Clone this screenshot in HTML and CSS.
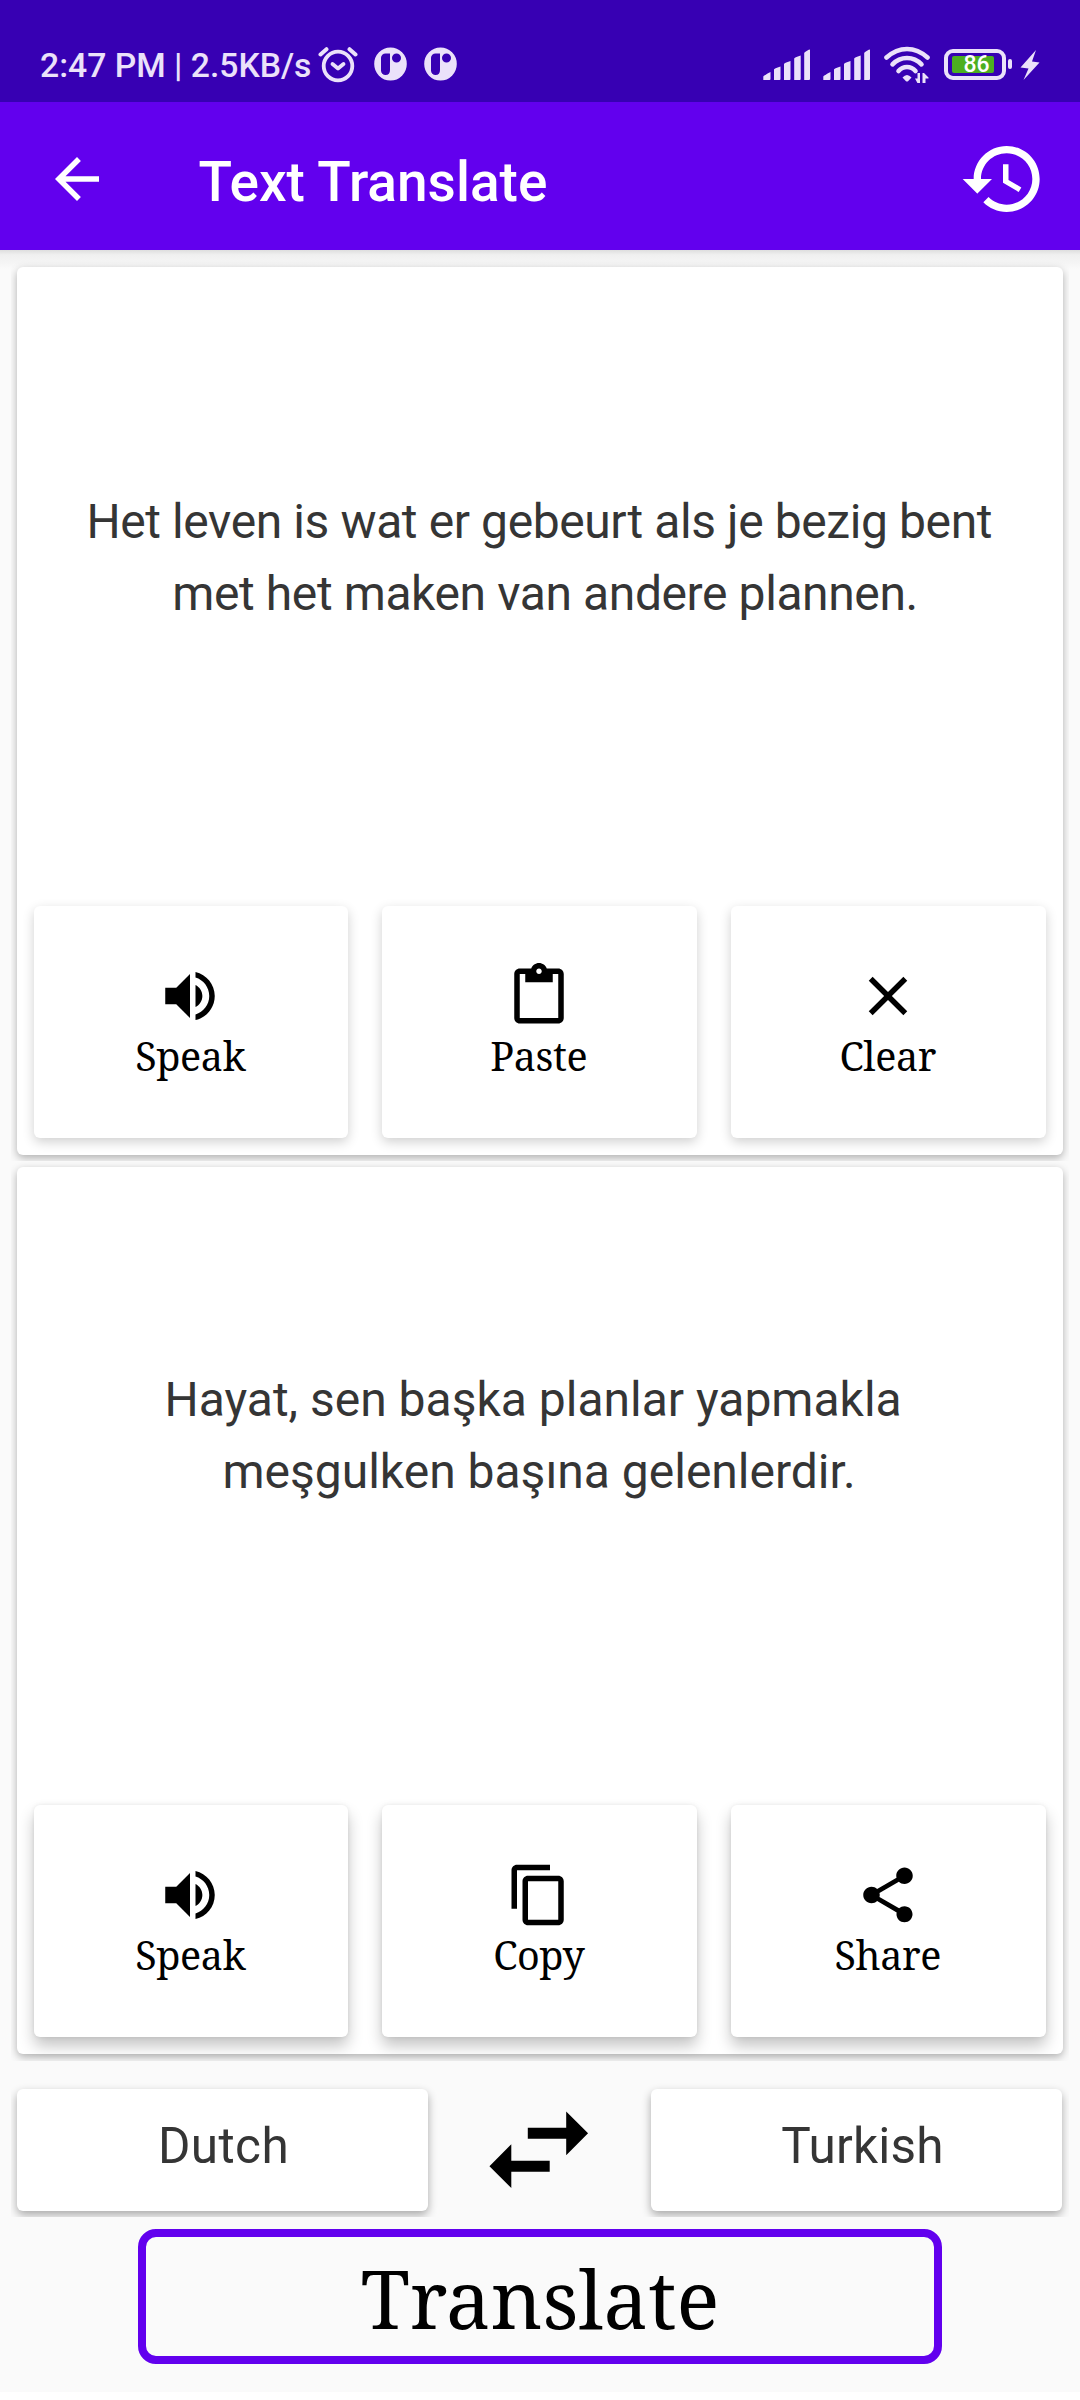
FILE: index.html
```html
<!DOCTYPE html>
<html lang="en">
<head>
<meta charset="utf-8">
<title>Text Translate</title>
<link rel="stylesheet" href="styles.css">
</head>
<body>
<svg class="defs" width="0" height="0">
  <symbol id="speak" viewBox="0 0 24 24"><path d="M3 9v6h4l5 5V4L7 9H3zm13.500 3c0-1.770-1.020-3.290-2.500-4.030v8.050c1.480-.73 2.500-2.250 2.500-4.020zM14 3.230v2.060c2.890.86 5 3.540 5 6.710s-2.110 5.850-5 6.710v2.060c4.010-.91 7-4.490 7-8.770s-2.990-7.860-7-8.770z"/></symbol>
  <symbol id="signal" viewBox="0 0 48 32"><path d="M.3 31V27.500Q.8 26.500 7.500 23V30q0 1-1 1zM11 31V20.500q0-1 6.500-3V30q0 1-1 1h-5.500zM21 31V15q0-1 6.500-3V30q0 1-1 1h-5.500zM31.200 31V9.500q0-1 6.500-3V30q0 1-1 1h-5.500zM41.200 31V4q0-1 5-3.500.8-.2.800.800V30q0 1-1 1h-4.800z"/></symbol>
  <symbol id="pin" viewBox="0 0 33 34"><path fill-rule="evenodd" d="M16.500.5a16.300 16.500 0 1 1 0 33a16.300 16.500 0 1 1 0-33zM11.500 6.500a4.500 4.500 0 0 0-4.500 4.500v12.500a4.500 4.500 0 0 0 4.500 4.500q4.500 0 4.500-5V6.500zM22.500 6.500a4.500 4.500 0 1 0 0 9a4.500 4.500 0 1 0 0-9z"/></symbol>
</svg>

<div class="status">
  <span class="status-text">2:47 PM | 2.5KB/s</span>
  <svg class="alarm" viewBox="0 0 40 38"><g fill="none" stroke="currentColor" stroke-linecap="round" stroke-linejoin="round"><circle cx="20" cy="21" r="14.300" stroke-width="3.800"/><path stroke-width="3.800" d="M14.500 19l5.500 4.500 5.500-4.500"/><path stroke-width="4" d="M2.500 9.500l6-5.300M37.500 9.500l-6-5.300"/></g></svg>
  <svg class="pin" viewBox="0 0 33 34"><use href="#pin"/></svg>
  <svg class="pin" viewBox="0 0 33 34"><use href="#pin"/></svg>
  <span class="spacer"></span>
  <svg class="signal" viewBox="0 0 48 32"><use href="#signal"/></svg>
  <svg class="signal" viewBox="0 0 48 32"><use href="#signal"/></svg>
  <svg class="wifi" viewBox="0 0 46 38"><g fill="none" stroke="currentColor" stroke-width="4.600" stroke-linecap="round"><path d="M2.500 12.500Q12 4 23 4t20.500 8.500"/><path d="M8.500 19.300Q14.500 13 23 13t14.500 6.300"/><path d="M14.500 26Q18 22 23 22t8.500 4"/></g><path d="M18.500 32.500q4.500-5 9 0l-3.500 3.700q-1 .8-2 0z"/><path d="M36 28v10h-2.600l-2.400-4.500h2.500V28zM38.500 38V28h1.500l4.500 4.500v1h-3V38z"/></svg>
  <span class="battery"><span class="level"></span><span class="percent">86</span></span>
  <span class="nub"></span>
  <svg class="bolt" viewBox="0 0 20 30"><path d="M16 0L.5 17.500 8.500 18.500 3.500 30 19.500 12.500 12 11.500z"/></svg>
</div>

<header class="appbar">
  <svg class="back" viewBox="0 0 24 24"><path d="M20 11H7.830l5.590-5.590L12 4l-8 8 8 8 1.410-1.410L7.830 13H20v-2z"/></svg>
  <h1>Text Translate</h1>
  <svg class="history" viewBox="0 0 24 24"><path d="M13 3c-4.970 0-9 4.030-9 9H1l3.890 3.890.07.140L9 12H6c0-3.870 3.130-7 7-7s7 3.130 7 7-3.130 7-7 7c-1.930 0-3.680-.79-4.940-2.060l-1.420 1.420C8.270 19.990 10.510 21 13 21c4.970 0 9-4.030 9-9s-4.030-9-9-9zm-1 5v5l4.280 2.540.72-1.210-3.500-2.080V8H12z"/></svg>
</header>

<main>
  <section class="panel source">
    <div class="card">
      <p class="text">Het leven is wat er gebeurt als je bezig bent&nbsp;<br>met het maken van andere plannen.</p>
      <div class="tiles">
        <button class="tile"><svg viewBox="0 0 24 24"><use href="#speak"/></svg><span>Speak</span></button>
        <button class="tile"><svg viewBox="0 0 24 24"><path d="M19 2h-4.180C14.400.84 13.300 0 12 0c-1.300 0-2.400.84-2.820 2H5c-1.100 0-2 .9-2 2v16c0 1.100.9 2 2 2h14c1.100 0 2-.9 2-2V4c0-1.100-.9-2-2-2zm-7 0c.55 0 1 .45 1 1s-.45 1-1 1-1-.45-1-1 .45-1 1-1zm7 18H5V4h2v3h10V4h2v16z"/></svg><span>Paste</span></button>
        <button class="tile"><svg viewBox="0 0 24 24"><path d="M19 6.410L17.590 5 12 10.590 6.410 5 5 6.410 10.590 12 5 17.590 6.410 19 12 13.410 17.590 19 19 17.590 13.410 12z"/></svg><span>Clear</span></button>
      </div>
    </div>
  </section>

  <section class="panel result">
    <div class="card">
      <p class="text">Hayat, sen başka planlar yapmakla&nbsp;<br>meşgulken başına gelenlerdir.</p>
      <div class="tiles">
        <button class="tile"><svg viewBox="0 0 24 24"><use href="#speak"/></svg><span>Speak</span></button>
        <button class="tile"><svg viewBox="0 0 24 24"><path d="M16 1H4c-1.100 0-2 .9-2 2v14h2V3h12V1zm3 4H8c-1.100 0-2 .9-2 2v14c0 1.100.9 2 2 2h11c1.100 0 2-.9 2-2V7c0-1.100-.9-2-2-2zm0 16H8V7h11v14z"/></svg><span>Copy</span></button>
        <button class="tile"><svg viewBox="0 0 24 24"><path d="M18 16.080c-.76 0-1.440.3-1.960.77L8.910 12.700c.05-.23.09-.46.09-.7s-.04-.47-.09-.7l7.050-4.110c.54.5 1.250.81 2.040.81 1.660 0 3-1.340 3-3s-1.340-3-3-3-3 1.340-3 3c0 .24.04.47.09.7L8.040 9.810C7.500 9.310 6.790 9 6 9c-1.660 0-3 1.340-3 3s1.340 3 3 3c.79 0 1.500-.31 2.040-.81l7.120 4.160c-.05.21-.08.43-.08.650 0 1.610 1.310 2.920 2.920 2.920s2.920-1.310 2.920-2.920-1.310-2.920-2.920-2.920z"/></svg><span>Share</span></button>
      </div>
    </div>
  </section>

  <section class="languages">
    <div class="lang-wrap from"><div class="lang">Dutch</div></div>
    <svg class="swap" viewBox="0 0 24 24"><path d="M6.990 11L3 15l3.990 4v-3H14v-2H6.990v-3zM21 9l-3.990-4v3H10v2h7.010v3L21 9z"/></svg>
    <div class="lang-wrap to"><div class="lang">Turkish</div></div>
  </section>

  <button class="translate">Translate</button>
</main>
</body>
</html>
```
FILE: styles.css
```css
* { box-sizing: border-box; }

body {
  margin: 0;
  width: 1080px;
  height: 2400px;
  background: #fff;
  font-family: Roboto, sans-serif;
  color: #353535;
  overflow: hidden;
}

svg { display: block; flex: none; fill: currentColor; }
.defs { position: absolute; }
button { font: inherit; color: inherit; border: 0; padding: 0; background: none; }

/* Status bar */
.status {
  display: flex;
  align-items: flex-start;
  height: 102px;
  padding: 44px 40px 0 40px;
  background: #3700b3;
  color: #ebe1fa;
}
.status-text {
  width: 278px;
  line-height: 44px;
  font-size: 33.700px;
  font-weight: 500;
  white-space: nowrap;
}
.alarm { width: 40px; height: 38px; margin-top: 1px; }
.pin { width: 33px; height: 34px; margin: 3px 0 0 15.500px; }
.pin + .pin { margin-left: 17px; }
.spacer { flex: 1; }
.signal { width: 48px; height: 32px; margin: 5px 12px 0 0; }
.wifi { width: 46px; height: 38px; margin: 1px 0 0 1px; }
.battery {
  display: flex;
  position: relative;
  width: 62px;
  height: 31px;
  margin: 5px 0 0 14.500px;
  padding: 3px 4px;
  border: 4px solid #ebe1fa;
  border-radius: 9px;
}
.level { width: 42px; height: 17px; background: #4caf20; border-radius: 2px; }
.percent {
  position: absolute;
  left: 15.500px;
  top: 0;
  font-size: 23px;
  font-weight: 500;
  line-height: 23px;
  color: #fff;
}
.nub { width: 4px; height: 10px; margin: 15px 8px 0 2px; border-radius: 2px; background: #ebe1fa; }
.bolt { width: 20px; height: 30px; margin-top: 6px; }

/* App bar */
.appbar {
  display: flex;
  align-items: center;
  height: 148px;
  padding: 6px 33.500px 0 44px;
  background: #6200ee;
  color: #fff;
}
.back { width: 66px; height: 66px; }
.appbar h1 {
  flex: 1;
  margin: 0;
  padding: 6px 0 0 88.500px;
  font-size: 55px;
  font-weight: 500;
  line-height: 64px;
}
.history { width: 88px; height: 88px; }

main {
  display: flex;
  flex-direction: column;
  height: 2142px;
  padding-top: 11px;
  background: linear-gradient(#dedede, #f0f0f0 5px, #f4f4f4 12px, #fafafa 19px);
}

/* Text panels; each one clips the shadow of its card */
.panel {
  height: 900px;
  margin: 0 11px;
  padding: 6px;
  overflow: hidden;
}
.result { padding-bottom: 7px; }
.card {
  display: flex;
  flex-direction: column;
  height: 100%;
  padding: 0 17px 17.500px;
  border-radius: 6px;
  background: #fff;
  box-shadow: 0 3px 9px rgba(0, 0, 0, .3);
}
.text {
  flex: 1;
  margin: 0;
  font-size: 48px;
  line-height: 72px;
  text-align: center;
  white-space: nowrap;
}
.source .text { padding: 218.500px 0 0 10px; letter-spacing: -.4px; }
.result .text { padding: 197px 2px 0 0; }

.tiles { display: grid; grid-template-columns: 314px 315px 315px; gap: 34px; }
.tile {
  display: flex;
  flex-direction: column;
  align-items: center;
  height: 232px;
  padding: 57px 1.500px 0 0;
  border-radius: 6px;
  background: #fff;
  color: #000;
  box-shadow: 0 4px 12px rgba(0, 0, 0, .19);
}
.result .tile { box-shadow: 0 9px 15px rgba(0, 0, 0, .23), 0 0 4px rgba(0, 0, 0, .08); }
.tile svg { width: 66px; height: 66px; }
.tile span {
  margin-top: 1px;
  font-family: "Noto Serif", serif;
  font-size: 39.500px;
  letter-spacing: -.4px;
  line-height: 52px;
}

/* Language row */
.languages { display: flex; align-items: center; height: 134px; margin: 22px 11px 0; }
.lang-wrap { height: 134px; padding-top: 6px; overflow: hidden; }
.from { width: 437px; padding-left: 6px; }
.to { width: 437px; margin-left: auto; padding-left: 19px; }
.lang {
  width: 411px;
  height: 122px;
  padding-top: 21px;
  border-radius: 6px;
  background: #fff;
  box-shadow: 0 4px 10px rgba(0, 0, 0, .33);
  font-size: 49.500px;
  line-height: 72px;
  text-align: center;
}
.from .lang { padding-left: 2px; letter-spacing: .4px; }
.to .lang { padding-left: 12px; letter-spacing: .2px; }
.swap { width: 131.500px; height: 131.500px; margin-left: 25px; color: #000; }

.translate {
  width: 804px;
  height: 135px;
  margin: 11.500px 0 0 138px;
  padding-top: 2px;
  border: 8px solid #6200ee;
  border-radius: 18px;
  color: #000;
  font-family: "Noto Serif", serif;
  font-size: 80px;
  line-height: 109px;
}
```
